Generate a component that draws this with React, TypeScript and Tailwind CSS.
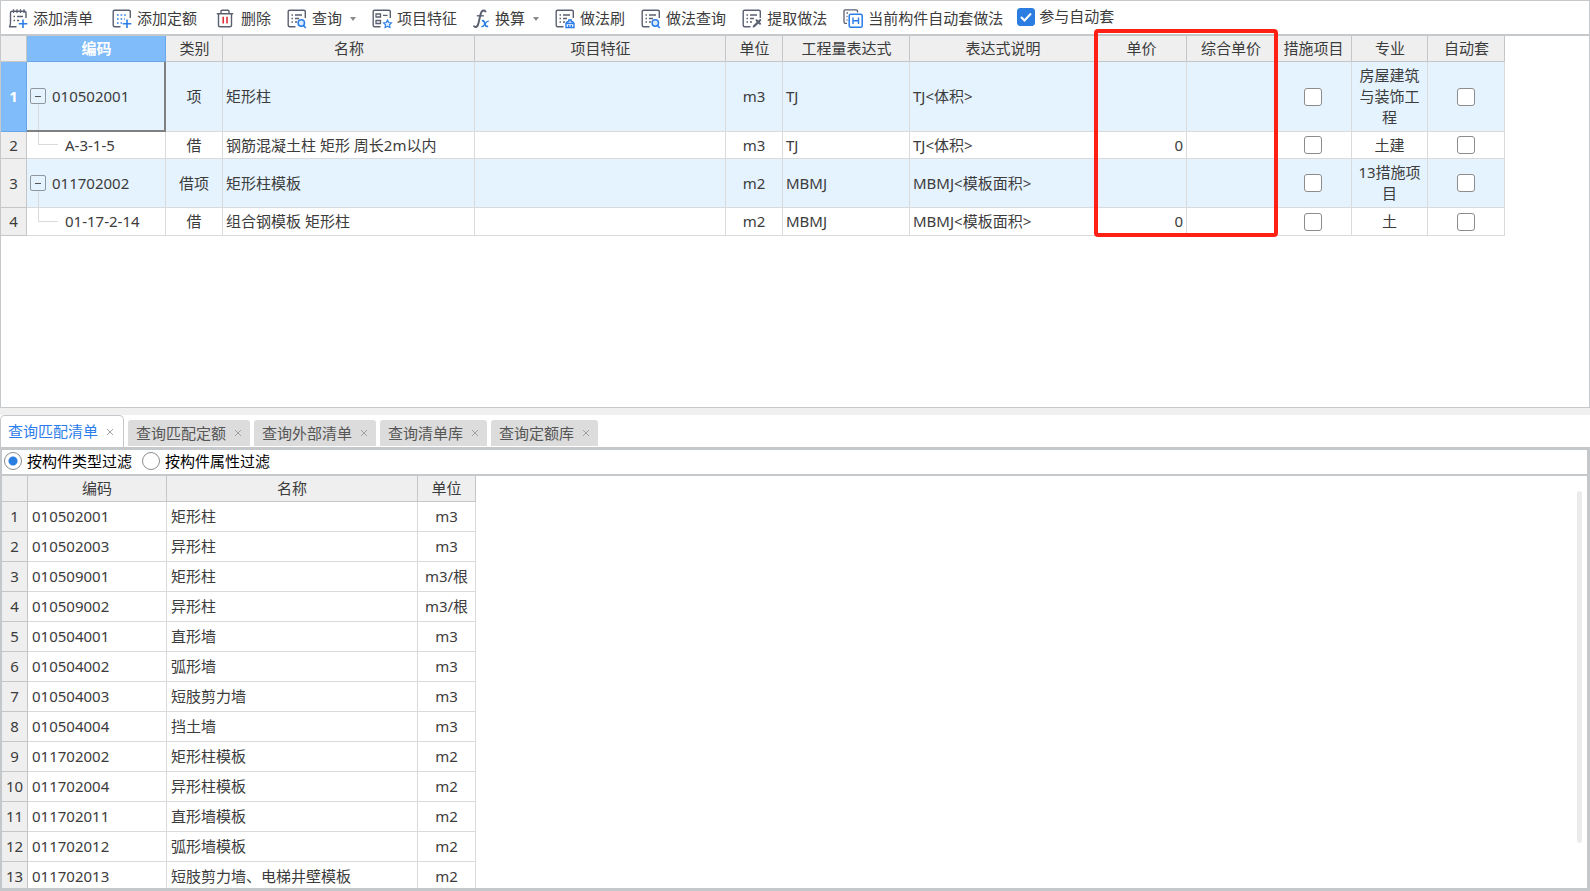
import React from "react";

type IconName =
  | "addList"
  | "addQuota"
  | "trash"
  | "query"
  | "feature"
  | "fx"
  | "brush"
  | "methodQuery"
  | "extract"
  | "auto";

const INK = "#5b6070";
const BLUE = "#2b7de9";

function SheetLines() {
  return (
    <path d="M4.5 6H6M4.5 9.5H6M4.5 13H6M8 6H15M8 9.5H12M8 13H10" stroke={INK} strokeWidth="1.4" />
  );
}

function Icon({ name }: { name: IconName }) {
  const frame = (
    <path d="M18.3 9V2.7Q18.3 1.2 16.8 1.2H2.7Q1.2 1.2 1.2 2.7V16.3Q1.2 17.8 2.7 17.8H8.5" stroke={INK} strokeWidth="1.4" />
  );
  const width = name === "fx" ? 17 : 20;
  return (
    <svg width={width} height="20" viewBox={`0 0 ${width} 20`} fill="none" aria-hidden="true" className="shrink-0 overflow-visible">
      {name === "addList" && (
        <>
          <path d="M18 9V3.7Q18 2.2 16.5 2.2H4Q2.5 2.2 2.5 3.7V12.5Q2.5 17.5 1 17.8H8.5" stroke={INK} strokeWidth="1.4" />
          <path d="M5.5 .2V4M9 .2V4M12.5 .2V4M16 .2V4M5.5 7.5H7M9 7.5H15M5.5 11.5H7M9 11.5H11" stroke={INK} strokeWidth="1.3" />
          <path d="M15 10.5V19M10.7 14.7H19.3" stroke={BLUE} strokeWidth="1.6" />
        </>
      )}
      {name === "addQuota" && (
        <>
          {frame}
          <path d="M5 6H15M5 10H13M5 14H10" stroke={BLUE} strokeWidth="1.4" strokeDasharray="1.6 2" />
          <path d="M15 10.5V19M10.7 14.7H19.3" stroke={BLUE} strokeWidth="1.6" />
        </>
      )}
      {name === "trash" && (
        <>
          <path d="M.8 4.8H17.2M5 4.5V2.3Q5 1.2 6.100 1.200H11.900Q13 1.200 13 2.300V4.500M2.500 5V16.300Q2.500 17.800 4 17.800H14Q15.500 17.800 15.500 16.300V5" stroke={INK} strokeWidth="1.4" />
          <path d="M7.200 7.800V14.500M11 7.800V14.500" stroke="#e0242b" strokeWidth="1.5" />
        </>
      )}
      {(name === "query" || name === "methodQuery") && (
        <>
          {frame}
          <SheetLines />
          <circle cx="14.3" cy="14" r="3.2" stroke={BLUE} strokeWidth="1.5" fill="#dcecff" />
          <path d="M16.5 16.5L18.8 19" stroke={BLUE} strokeWidth="1.5" />
        </>
      )}
      {name === "feature" && (
        <>
          {frame}
          <path d="M4 5H8.5V8H4ZM4 11.5H8.5V14.5H4ZM11 6.3H15.5" stroke={INK} strokeWidth="1.3" />
          <path d="M15.5 11L16.8 13.5L19.5 13.9L17.5 15.8L18 18.6L15.5 17.3L13 18.6L13.5 15.8L11.5 13.9L14.2 13.5Z" stroke={BLUE} strokeWidth="1.1" fill="#dcecff" />
        </>
      )}
      {name === "fx" && (
        <>
          <path d="M12.8 3.2Q12.100 1.200 10.300 1.500Q8.300 1.900 7.400 6L5.400 14.500Q4.400 18.500 2.200 18Q.9 17.800 .8 16.500" stroke={INK} strokeWidth="1.9" />
          <path d="M3.800 6.800H10.800" stroke={INK} strokeWidth="1.4" />
          <path d="M9 12Q11 11 11.800 14.500Q12.500 18.500 15 17" stroke={BLUE} strokeWidth="1.8" />
          <path d="M15.800 12.200Q14 12 12 14.800Q10 18 8.300 17.600" stroke={BLUE} strokeWidth="1.3" />
        </>
      )}
      {name === "brush" && (
        <>
          {frame}
          <SheetLines />
          <path d="M11 14.5H19V18.5H11ZM11.5 14.5Q11.5 12.5 13.8 12.5V11H16.2V12.5Q18.5 12.5 18.5 14.5M13.7 16V18.5M16.3 16V18.5" stroke={BLUE} strokeWidth="1.4" />
        </>
      )}
      {name === "extract" && (
        <>
          {frame}
          <SheetLines />
          <path d="M10.5 18.8L11.2 16.5L15.5 12.2L17.2 13.8L12.9 18.1Z" fill={INK} />
          <path d="M14.5 11.3L18 14.7M16.3 13L18.3 11" stroke={INK} strokeWidth="2" strokeLinecap="round" />
        </>
      )}
      {name === "auto" && (
        <>
          <path d="M14.5 3.5V2.2Q14.5 .9 13.2 .9H2.3Q1 .9 1 2.2V13Q1 14.3 2.3 14.3H4M3.5 4H5M3.5 7.5H4.5M3.5 11H4.5" stroke={INK} strokeWidth="1.3" />
          <rect x="6.2" y="5.2" width="13" height="13" rx="1.5" stroke={BLUE} strokeWidth="1.5" fill="white" />
          <path d="M10 8.5V15M15.5 8.5V15M10 11.7H15.5" stroke={BLUE} strokeWidth="1.4" />
        </>
      )}
    </svg>
  );
}

type Tool = { icon: IconName; label: string; menu?: boolean };

const editTools: Tool[] = [
  { icon: "addList", label: "添加清单" },
  { icon: "addQuota", label: "添加定额" },
  { icon: "trash", label: "删除" },
];

const methodTools: Tool[] = [
  { icon: "query", label: "查询", menu: true },
  { icon: "feature", label: "项目特征" },
  { icon: "fx", label: "换算", menu: true },
  { icon: "brush", label: "做法刷" },
  { icon: "methodQuery", label: "做法查询" },
  { icon: "extract", label: "提取做法" },
  { icon: "auto", label: "当前构件自动套做法" },
];

function ToolButton({ tool }: { tool: Tool }) {
  return (
    <button type="button" className="flex items-center gap-[5px]">
      <Icon name={tool.icon} />
      <span>{tool.label}</span>
      {tool.menu && (
        <span className="ml-[3px] border-x-[3px] border-t-4 border-x-transparent border-t-[#8a8a8a]" />
      )}
    </button>
  );
}

function Toolbar() {
  return (
    <div className="flex h-[33px] items-center gap-4 whitespace-nowrap pt-[2px] pl-[7px]">
      <div className="flex gap-[19px]">
        {editTools.map((t) => (
          <ToolButton key={t.label} tool={t} />
        ))}
      </div>
      {methodTools.map((t) => (
        <ToolButton key={t.label} tool={t} />
      ))}
      <label className="-ml-0.5 flex items-center gap-1 pb-1">
        <Tick label="参与自动套" checked />
        <span>参与自动套</span>
      </label>
    </div>
  );
}

function Tick({ label, checked = false }: { label: string; checked?: boolean }) {
  return (
    <span className="inline-grid align-middle">
      <input
        type="checkbox"
        defaultChecked={checked}
        aria-label={label}
        className="peer col-start-1 row-start-1 size-[18px] appearance-none rounded-[3px] border border-[#8c8c8c] bg-white checked:border-[#2b7de1] checked:bg-[#2b7de1]"
      />
      <svg viewBox="0 0 18 18" fill="none" aria-hidden="true" className="pointer-events-none invisible col-start-1 row-start-1 size-[18px] peer-checked:visible">
        <path d="M4 9L7.5 12.5L14 5.5" stroke="white" strokeWidth="2" />
      </svg>
    </span>
  );
}

type Item = {
  code: string;
  kind: string;
  name: string;
  unit: string;
  expr: string;
  note: string;
  price?: string;
  major: string;
  parent?: boolean;
  rowHeight: string;
  innerHeight: string;
};

const items: Item[] = [
  { code: "010502001", kind: "项", name: "矩形柱", unit: "m3", expr: "TJ", note: "TJ<体积>", major: "房屋建筑与装饰工程", parent: true, rowHeight: "h-[70px]", innerHeight: "h-[68px]" },
  { code: "A-3-1-5", kind: "借", name: "钢筋混凝土柱 矩形 周长2m以内", unit: "m3", expr: "TJ", note: "TJ<体积>", price: "0", major: "土建", rowHeight: "h-[27px]", innerHeight: "h-[26px]" },
  { code: "011702002", kind: "借项", name: "矩形柱模板", unit: "m2", expr: "MBMJ", note: "MBMJ<模板面积>", major: "13措施项目", parent: true, rowHeight: "h-[49px]", innerHeight: "h-[48px]" },
  { code: "01-17-2-14", kind: "借", name: "组合钢模板 矩形柱", unit: "m2", expr: "MBMJ", note: "MBMJ<模板面积>", price: "0", major: "土", rowHeight: "h-[28px]", innerHeight: "h-[27px]" },
];

const columns = [
  { title: "", width: "w-[26px]" },
  { title: "编码", width: "w-[139px]" },
  { title: "类别", width: "w-[57px]" },
  { title: "名称", width: "w-[252px]" },
  { title: "项目特征", width: "w-[251px]" },
  { title: "单位", width: "w-[57px]" },
  { title: "工程量表达式", width: "w-[127px]" },
  { title: "表达式说明", width: "w-[186px]" },
  { title: "单价", width: "w-[91px]" },
  { title: "综合单价", width: "w-[88px]" },
  { title: "措施项目", width: "w-[77px]" },
  { title: "专业", width: "w-[76px]" },
  { title: "自动套", width: "w-[77px]" },
];

const headCell = "border-r border-b border-[#c6c6c6] bg-[#efefef] p-0 text-center font-normal";
const activeHeadCell = "border-r border-b border-[#6aa5e8] bg-[#80bbfa] p-0 text-center font-bold text-white";
const cell = "border-r border-b border-[#dadada] px-[3px] py-0";

function CodeCell({ item, selected }: { item: Item; selected: boolean }) {
  return (
    <td className={selected ? "border-r-2 border-b-2 border-[#808080] p-0" : "border-r border-b border-[#dadada] p-0"}>
      <div className={`flex items-stretch ${item.innerHeight}`}>
        {item.parent ? (
          <>
            <span className="flex w-[22px] flex-col items-center">
              <span className="flex-1" />
              <button type="button" aria-label={`收起 ${item.code}`} className="grid size-4 shrink-0 place-items-center rounded-[2px] border border-[#8f979e]">
                <span className="h-px w-[6px] bg-[#555]" />
              </button>
              <span className="w-px flex-1 bg-[#dadada]" />
            </span>
            <span className="self-center pl-[3px]">{item.code}</span>
          </>
        ) : (
          <>
            <span className="ml-[11px] h-1/2 w-5 border-b border-l border-[#dadada]" />
            <span className="self-center pl-[7px]">{item.code}</span>
          </>
        )}
      </div>
    </td>
  );
}

function ItemTable() {
  return (
    <div className="relative w-max">
      <table className="w-max table-fixed border-separate border-spacing-0">
        <colgroup>
          {columns.map((c, i) => (
            <col key={i} className={c.width} />
          ))}
        </colgroup>
        <thead>
          <tr className="h-[26px]">
            {columns.map((c, i) => (
              <th key={i} scope="col" className={i === 1 ? activeHeadCell : headCell}>
                <div className={`${c.width} -mr-px leading-[25px] whitespace-nowrap`}>{c.title}</div>
              </th>
            ))}
          </tr>
        </thead>
        <tbody>
          {items.map((item, i) => (
            <tr key={item.code} className={`${item.rowHeight} ${item.parent ? "bg-[#e5f3ff]" : "bg-white"}`}>
              <th scope="row" className={i === 0 ? activeHeadCell : headCell}>
                {i + 1}
              </th>
              <CodeCell item={item} selected={i === 0} />
              <td className={`${cell} text-center`}>{item.kind}</td>
              <td className={cell}>{item.name}</td>
              <td className={cell} />
              <td className={`${cell} text-center`}>{item.unit}</td>
              <td className={cell}>{item.expr}</td>
              <td className={cell}>{item.note}</td>
              <td className={`${cell} text-right`}>{item.price}</td>
              <td className={cell} />
              <td className={`${cell} text-center leading-none`}>
                <Tick label={`措施项目 ${item.code}`} />
              </td>
              <td className="border-r border-b border-[#dadada] px-[5px] py-0 text-center">{item.major}</td>
              <td className={`${cell} text-center leading-none`}>
                <Tick label={`自动套 ${item.code}`} />
              </td>
            </tr>
          ))}
        </tbody>
      </table>
      <div className="pointer-events-none absolute -top-[7px] -bottom-px left-[1093px] w-[184px] rounded-[4px] border-4 border-[#ff2015]" />
    </div>
  );
}

const tabs = ["查询匹配清单", "查询匹配定额", "查询外部清单", "查询清单库", "查询定额库"];

function Tabs() {
  return (
    <div role="tablist" className="flex h-8 items-end gap-1">
      {tabs.map((t, i) => (
        <button
          key={t}
          type="button"
          role="tab"
          aria-selected={i === 0}
          className={
            i === 0
              ? "flex h-8 items-center gap-2 rounded-t-[5px] border border-b-0 border-[#c4c8cc] bg-white pr-[9px] pl-[7px] text-[#2b7de9]"
              : "mb-px flex h-[26px] items-center gap-2 rounded-t-[3px] bg-[#dcdcdc] px-2 text-[#555]"
          }
        >
          <span>{t}</span>
          <svg width="8" height="8" viewBox="0 0 8 8" aria-hidden="true">
            <path d="M1 1L7 7M7 1L1 7" stroke="#a0a0a0" strokeWidth="1" />
          </svg>
        </button>
      ))}
    </div>
  );
}

function FilterRadio({ label, checked = false }: { label: string; checked?: boolean }) {
  return (
    <label className="flex items-center gap-[5px] text-black">
      <input
        type="radio"
        name="filter"
        defaultChecked={checked}
        className="size-[18px] appearance-none rounded-full border border-[#8c8c8c] bg-white checked:bg-[radial-gradient(circle,#2b7de1_4px,white_5px)]"
      />
      <span>{label}</span>
    </label>
  );
}

const matches = [
  ["010502001", "矩形柱", "m3"],
  ["010502003", "异形柱", "m3"],
  ["010509001", "矩形柱", "m3/根"],
  ["010509002", "异形柱", "m3/根"],
  ["010504001", "直形墙", "m3"],
  ["010504002", "弧形墙", "m3"],
  ["010504003", "短肢剪力墙", "m3"],
  ["010504004", "挡土墙", "m3"],
  ["011702002", "矩形柱模板", "m2"],
  ["011702004", "异形柱模板", "m2"],
  ["011702011", "直形墙模板", "m2"],
  ["011702012", "弧形墙模板", "m2"],
  ["011702013", "短肢剪力墙、电梯井壁模板", "m2"],
];

function MatchTable() {
  return (
    <table className="w-[474px] table-fixed border-separate border-spacing-0">
      <thead>
        <tr className="h-[26px]">
          <th className={`${headCell} w-[26px]`} />
          <th scope="col" className={`${headCell} w-[139px]`}>编码</th>
          <th scope="col" className={`${headCell} w-[251px]`}>名称</th>
          <th scope="col" className={`${headCell} w-[58px]`}>单位</th>
        </tr>
      </thead>
      <tbody>
        {matches.map(([code, name, unit], i) => (
          <tr key={code} className="h-[30px]">
            <th scope="row" className={headCell}>{i + 1}</th>
            <td className={`${cell} pl-1`}>{code}</td>
            <td className={`${cell} pl-1`}>{name}</td>
            <td className={`${cell} text-center`}>{unit}</td>
          </tr>
        ))}
      </tbody>
    </table>
  );
}

export default function App() {
  return (
    <div className="flex h-screen flex-col overflow-hidden bg-white font-['Noto_Sans','Noto_Sans_CJK_SC',sans-serif] text-[15px] leading-[21px] text-[#3c3c3c]">
      <section className="flex h-[408px] shrink-0 flex-col border border-[#c6c9cc]">
        <Toolbar />
        <div className="flex-1 border-t-2 border-[#c6c9cc]">
          <ItemTable />
        </div>
      </section>
      <div className="h-[7px] shrink-0 bg-[#f0f0f0]" />
      <Tabs />
      <section className="flex min-h-0 flex-1 flex-col border-[3px] border-l-2 border-[#c4c8cb]">
        <div className="flex h-6 shrink-0 items-center gap-[10px] pb-[2px] pl-[2px]">
          <FilterRadio label="按构件类型过滤" checked />
          <FilterRadio label="按构件属性过滤" />
        </div>
        <div className="flex min-h-0 flex-1 justify-between overflow-hidden border-t-2 border-[#c6c9cc]">
          <MatchTable />
          <div className="mt-[15px] mr-[5px] mb-[45px] w-[5px] rounded-full bg-[#ebebeb]" />
        </div>
      </section>
    </div>
  );
}
